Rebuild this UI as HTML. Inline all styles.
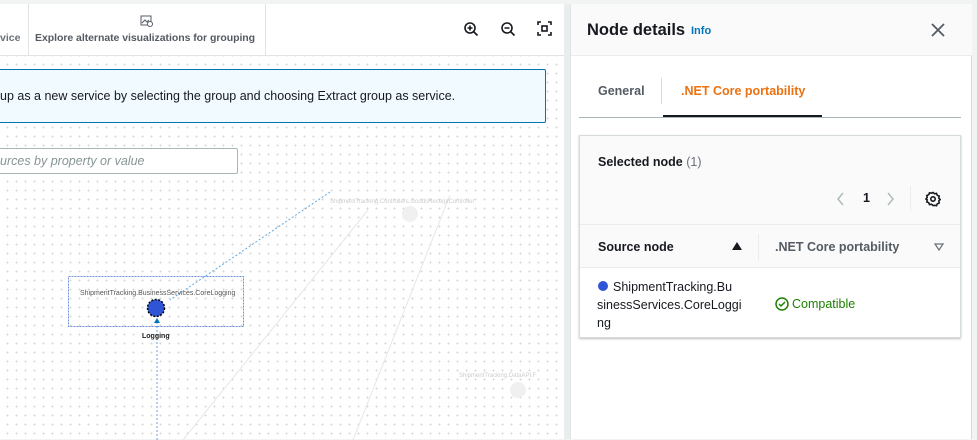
<!DOCTYPE html><html><head><style>
*{margin:0;padding:0;box-sizing:border-box}
body{width:977px;height:439px;overflow:hidden;background:#f2f3f3;font-family:"Liberation Sans",sans-serif;position:relative}
.abs{position:absolute}
#left{left:0;top:4px;width:564px;height:435px;background-color:#fff;background-image:radial-gradient(#d5d5d5 0.8px,transparent 1px);background-size:9px 9px;background-position:3px 2px}
#tb{left:0;top:0;width:564px;height:52px;background:#fff;border-bottom:1px solid #e1e4e4}
#right{left:570px;top:4px;width:402px;height:435px;background:#fff;border-left:1px solid #e1e4e4;border-right:1px solid #d5dbdb}
</style></head><body>
<div id="left" class="abs">
 <div id="tb" class="abs">
  <div class="abs" style="left:28px;top:0;width:1px;height:52px;background:#e1e4e4"></div>
  <div class="abs" style="left:265px;top:0;width:1px;height:52px;background:#e1e4e4"></div>
  <div class="abs" style="left:0;top:28px;font-size:10.5px;font-weight:bold;color:#687078">vice</div>
  <div class="abs" style="left:35px;top:28px;font-size:10.5px;font-weight:bold;color:#545b64;letter-spacing:-0.05px">Explore alternate visualizations for grouping</div>
  <svg class="abs" style="left:140px;top:11px" width="14" height="13" viewBox="0 0 14 13"><rect x="1" y="1" width="10" height="9" fill="none" stroke="#545b64"/><path d="M2 8l3-3 2 2 2-2" fill="none" stroke="#545b64"/><circle cx="10" cy="9" r="2.5" fill="#fff" stroke="#545b64"/></svg>
  <svg class="abs" style="left:463px;top:17px" width="16" height="16" viewBox="0 0 16 16" fill="none" stroke="#16191f" stroke-width="1.6"><circle cx="7" cy="7" r="5"/><path d="M11 11l3.5 3.5M7 4.5v5M4.5 7h5"/></svg>
  <svg class="abs" style="left:500px;top:17px" width="16" height="16" viewBox="0 0 16 16" fill="none" stroke="#16191f" stroke-width="1.6"><circle cx="7" cy="7" r="5"/><path d="M11 11l3.5 3.5M4.5 7h5"/></svg>
  <svg class="abs" style="left:537px;top:17px" width="15" height="15" viewBox="0 0 15 15" fill="none" stroke="#16191f" stroke-width="1.6"><path d="M1 4V1h3M11 1h3v3M14 11v3h-3M4 14H1v-3"/><rect x="5" y="5" width="5" height="5"/></svg>
 </div>
 <div class="abs" style="left:-2px;top:65px;width:548px;height:54px;background:#f1faff;border:1px solid #0073bb;border-radius:2px"></div>
 <div class="abs" style="left:0;top:85px;font-size:12.5px;color:#16191f">up as a new service by selecting the group and choosing Extract group as service.</div>
 <div class="abs" style="left:-2px;top:144px;width:240px;height:26px;background:#fff;border:1px solid #aab7b8;border-radius:2px"></div>
 <div class="abs" style="left:0;top:150px;font-size:12.5px;font-style:italic;color:#879596">urces by property or value</div>
 <svg class="abs" style="left:0;top:176px" width="564" height="260">
  <path d="M330 12L170 120" stroke="#5fa7e0" stroke-dasharray="2 2" fill="none"/>
  <path d="M368 30L183 260" stroke="#e6e6e6" fill="none"/>
  <path d="M450 15L353 260" stroke="#e6e6e6" fill="none"/>
  <path d="M157 260V140" stroke="#5fa7e0" stroke-dasharray="2 2" fill="none"/>
  <path d="M157 138l-3 5h6z" fill="#0073bb"/>
  <rect x="68.5" y="96.5" width="175" height="50" fill="none" stroke="#6d8fd8" stroke-dasharray="2 1"/>
  <circle cx="156" cy="128" r="8.5" fill="#2f54d6" stroke="#000" stroke-width="1.5" stroke-dasharray="2 1.5"/>
  <circle cx="410" cy="34" r="8" fill="#f0f0f0"/>
  <circle cx="518" cy="210" r="8" fill="#f0f0f0"/>
  <text x="80" y="115" font-size="7" fill="#555" font-family="Liberation Sans">ShipmentTracking.BusinessServices.CoreLogging</text>
  <text x="142" y="158" font-size="7" font-weight="bold" fill="#222" font-family="Liberation Sans">Logging</text>
  <text x="330" y="23" font-size="6" fill="#ccc" font-family="Liberation Sans">ShipmentTracking.Controllers.GoodsReceiptController</text>
  <text x="459" y="197" font-size="6" fill="#ccc" font-family="Liberation Sans">ShipmentTracking.DataAPI.F</text>
 </svg>
</div>
<div class="abs" style="left:564px;top:4px;width:6px;height:435px;background:#eaeded"></div>
<div id="right" class="abs">
 <div class="abs" style="left:0;top:0;width:401px;height:52px;background:#fafafa;border-bottom:1px solid #e9ebed"></div>
 <div class="abs" style="left:16px;top:17px;font-size:16.5px;font-weight:bold;color:#16191f">Node details</div>
 <div class="abs" style="left:120px;top:21px;font-size:11px;font-weight:bold;color:#0073bb">Info</div>
 <svg class="abs" style="left:360px;top:19px" width="14" height="14" viewBox="0 0 14 14" stroke="#545b64" stroke-width="1.8"><path d="M1 1l12 12M13 1L1 13"/></svg>
 <div class="abs" style="left:27px;top:80px;font-size:12.5px;font-weight:bold;color:#545b64">General</div>
 <div class="abs" style="left:90px;top:74px;width:1px;height:26px;background:#d5dbdb"></div>
 <div class="abs" style="left:110px;top:80px;font-size:12.5px;font-weight:bold;color:#ec7211">.NET Core portability</div>
 <div class="abs" style="left:8px;top:113px;width:382px;height:1px;background:#aab7b8"></div>
 <div class="abs" style="left:92px;top:111px;width:159px;height:2px;background:#16191f"></div>
 <div class="abs" style="left:8px;top:131px;width:382px;height:203px;border:1px solid #d5dbdb;box-shadow:0 1px 2px rgba(0,0,0,.25);background:#fff">
  <div class="abs" style="left:0;top:0;width:380px;height:89px;background:#fafafa;border-bottom:1px solid #eaeded"></div>
  <div class="abs" style="left:18px;top:19px;font-size:12.5px;font-weight:bold;color:#16191f">Selected node <span style="font-weight:normal;color:#687078">(1)</span></div>
  <svg class="abs" style="left:255px;top:55px" width="80" height="16" fill="none" stroke="#aab7b8" stroke-width="1.4"><path d="M8 2L3 8l5 6"/><path d="M53 2l5 6-5 6"/></svg>
  <div class="abs" style="left:283px;top:55px;font-size:12.5px;font-weight:bold;color:#16191f">1</div>
  <div class="abs" style="left:330px;top:50px;width:1px;height:25px;background:#eaeded"></div>
  <svg class="abs" style="left:345px;top:55px" width="16" height="16" viewBox="0 0 16 16" fill="none" stroke="#16191f" stroke-width="1.6"><circle cx="8" cy="8" r="2.2"/><path d="M8 1.5l1.5 1.3 2-.4.8 1.9 1.9.8-.4 2 1.3 1.4-1.3 1.5.4 2-1.9.8-.8 1.9-2-.4L8 14.5l-1.5-1.3-2 .4-.8-1.9-1.9-.8.4-2L.9 8l1.3-1.5-.4-2 1.9-.8.8-1.9 2 .4z"/></svg>
  <div class="abs" style="left:0;top:89px;width:380px;height:43px;background:#fafafa;border-bottom:1px solid #eaeded"></div>
  <div class="abs" style="left:18px;top:104px;font-size:12.5px;font-weight:bold;color:#16191f">Source node</div>
  <svg class="abs" style="left:152px;top:106px" width="10" height="9"><path d="M0 8h10L5 0z" fill="#16191f"/></svg>
  <div class="abs" style="left:178px;top:98px;width:1px;height:26px;background:#eaeded"></div>
  <div class="abs" style="left:195px;top:104px;font-size:12.5px;font-weight:bold;color:#545b64">.NET Core portability</div>
  <svg class="abs" style="left:354px;top:107px" width="10" height="8"><path d="M1 1h8L5 7z" fill="none" stroke="#687078" stroke-width="1.2"/></svg>
  <div class="abs" style="left:18px;top:145px;width:10px;height:10px;border-radius:50%;background:#2f54d6"></div>
  <div class="abs" style="left:17px;top:142px;font-size:12.5px;line-height:18px;color:#16191f;white-space:nowrap"><span style="padding-left:16px">ShipmentTracking.Bu</span><br>sinessServices.CoreLoggi<br>ng</div>
  <svg class="abs" style="left:195px;top:161px" width="14" height="14" viewBox="0 0 14 14" fill="none" stroke="#1d8102" stroke-width="1.5"><circle cx="7" cy="7" r="6"/><path d="M4 7l2 2 4-4"/></svg>
  <div class="abs" style="left:212px;top:161px;font-size:12.5px;color:#1d8102">Compatible</div>
 </div>
</div>
</body></html>
